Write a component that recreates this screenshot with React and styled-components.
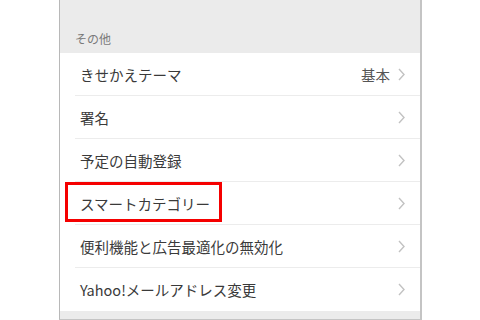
import React from 'react'
import styled, { createGlobalStyle } from 'styled-components'

const GlobalStyle = createGlobalStyle`
  html, body {
    margin: 0;
    padding: 0;
    background: #fff;
  }
  body {
    font-family: "Noto Sans CJK JP", "Noto Sans", sans-serif;
  }
`

const Frame = styled.div`
  margin-left: 59px;
  width: 360px;
  height: 319px;
  background: #ebebeb;
  border-left: 1px solid #b8b8b8;
  border-right: 2px solid #c4c4c4;
  border-bottom: 1px solid #c4c4c4;
  display: flex;
  flex-direction: column;
`

const SectionHead = styled.div`
  height: 53px;
  box-sizing: border-box;
  padding: 0 0 6px 15px;
  display: flex;
  align-items: flex-end;
  font-size: 12px;
  color: #7a7a7a;
`

const List = styled.div`
  background: #fff;
`

const Row = styled.div`
  position: relative;
  height: 43px;
  box-sizing: border-box;
  margin-left: 15px;
  padding: 0 15px 0 5px;
  display: flex;
  align-items: center;
  border-bottom: ${({ last }) => (last ? 'none' : '1px solid #ececec')};
`

const Label = styled.span`
  flex: 1;
  font-size: 14.5px;
  color: #3a3a3a;
`

const Value = styled.span`
  font-size: 14.5px;
  color: #555;
  margin-right: 8px;
`

const Highlight = styled.div`
  position: absolute;
  left: -10px;
  top: 0;
  width: 157px;
  height: 40px;
  box-sizing: border-box;
  border: 3px solid #f50000;
  pointer-events: none;
`

const Chevron = () => (
  <svg width="7" height="13" viewBox="0 0 7 13">
    <path d="M1 1 L6 6.5 L1 12" fill="none" stroke="#c2c2c2" strokeWidth="1.4" />
  </svg>
)

const items = [
  { label: 'きせかえテーマ', value: '基本' },
  { label: '署名' },
  { label: '予定の自動登録' },
  { label: 'スマートカテゴリー', marked: true },
  { label: '便利機能と広告最適化の無効化' },
  { label: 'Yahoo!メールアドレス変更' },
]

const App = () => (
  <>
    <GlobalStyle />
    <Frame>
      <SectionHead>その他</SectionHead>
      <List>
        {items.map((item, i) => (
          <Row key={item.label} last={i === items.length - 1}>
            <Label>{item.label}</Label>
            {item.value && <Value>{item.value}</Value>}
            <Chevron />
            {item.marked && <Highlight />}
          </Row>
        ))}
      </List>
    </Frame>
  </>
)

export default App
